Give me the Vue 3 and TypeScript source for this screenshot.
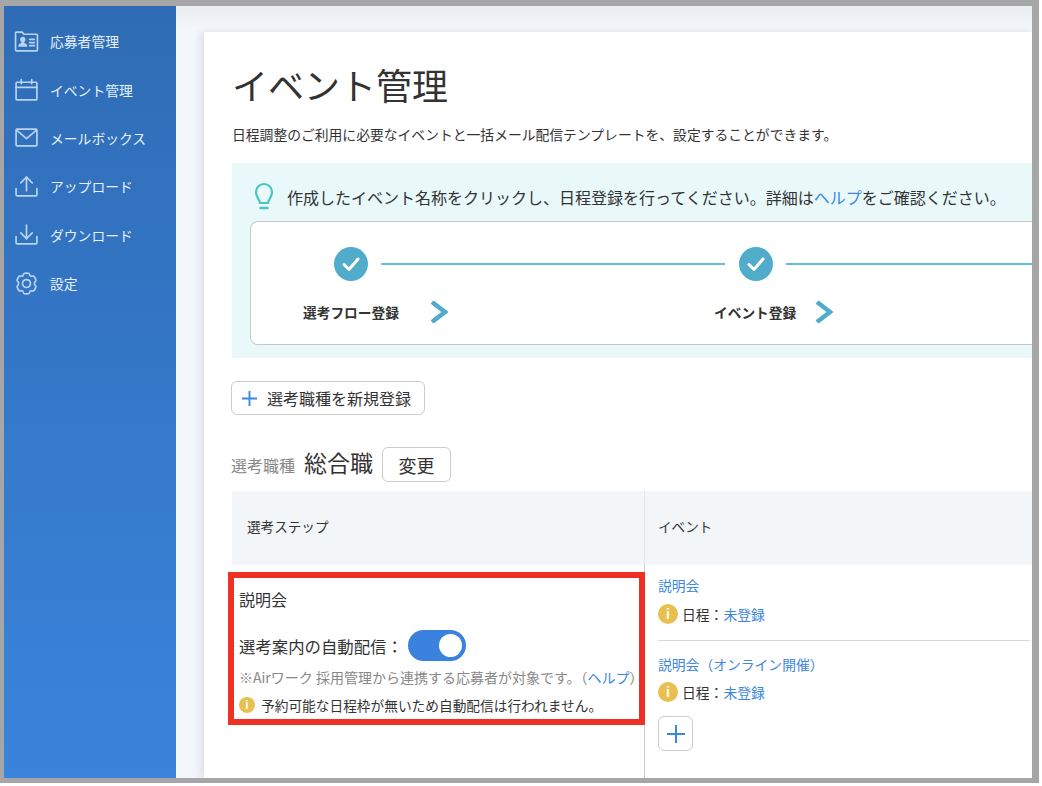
<template>
  <div class="frame">
    <aside class="sidebar">
      <a v-for="item in navItems" :key="item.label" class="nav-item">
        <svg class="nav-icon" viewBox="0 0 24 24" fill="none" stroke="currentColor" stroke-width="1.6" stroke-linecap="round" stroke-linejoin="round">
          <path v-for="(d, i) in item.paths" :key="i" :d="d" />
          <path v-if="item.solid" :d="item.solid" fill="currentColor" stroke="none" />
        </svg>
        <span>{{ item.label }}</span>
      </a>
    </aside>

    <main class="main">
      <section class="card">
        <h1 class="title">イベント管理</h1>
        <p class="lead">日程調整のご利用に必要なイベントと一括メール配信テンプレートを、設定することができます。</p>

        <div class="hint">
          <div class="hint-text">
            <svg class="bulb" viewBox="0 0 24 30" fill="none" stroke="#4cc4c4" stroke-width="2.2" stroke-linecap="round">
              <path d="M8 21c0-3-4-5-4-11a8 8 0 0 1 16 0c0 6-4 8-4 11z" />
              <path d="M8.500 26h7" stroke-width="2.600" />
            </svg>
            <span>作成したイベント名称をクリックし、日程登録を行ってください。詳細は<a class="link">ヘルプ</a>をご確認ください。</span>
          </div>
          <div class="steps">
            <div v-for="step in steps" :key="step" class="step">
              <div class="step-track">
                <svg class="check" viewBox="0 0 34 34">
                  <circle cx="17" cy="17" r="17" fill="#50acca" />
                  <path d="M10 17.500l5 5 9-10.500" fill="none" stroke="#fff" stroke-width="3" stroke-linecap="round" stroke-linejoin="round" />
                </svg>
                <span class="step-line"></span>
              </div>
              <div class="step-label">
                <b>{{ step }}</b>
                <svg class="chevron" viewBox="0 0 18 22" fill="none" stroke="#50acca" stroke-width="4.500">
                  <path d="M2 1l13 10-13 10" />
                </svg>
              </div>
            </div>
          </div>
        </div>

        <button class="btn add-job">
          <svg class="plus" viewBox="0 0 18 18" stroke="#3b87e0" stroke-width="2"><path d="M9 1v16M1 9h16" /></svg>
          選考職種を新規登録
        </button>

        <div class="job-row">
          <span class="job-label">選考職種</span>
          <span class="job-name">総合職</span>
          <button class="btn job-change">変更</button>
        </div>

        <div class="table">
          <div class="th th-step">選考ステップ</div>
          <div class="th th-event">イベント</div>

          <div class="td-step">
            <div class="highlight">
              <div class="step-name">説明会</div>
              <div class="auto-row">
                <span>選考案内の自動配信：</span>
                <span class="toggle"><span class="knob"></span></span>
              </div>
              <p class="note">※Airワーク 採用管理から連携する応募者が対象です。（<a class="link">ヘルプ</a>）</p>
              <p class="warn">
                <span class="info info-small">i</span>
                予約可能な日程枠が無いため自動配信は行われません。
              </p>
            </div>
          </div>

          <div class="td-event">
            <div v-for="(ev, i) in events" :key="ev" class="event" :class="{ 'event-first': i === 0 }">
              <a class="link event-name">{{ ev }}</a>
              <div class="event-date">
                <span class="info">i</span>
                <span>日程：<a class="link">未登録</a></span>
              </div>
            </div>
            <button class="btn add-event">
              <svg class="plus-event" viewBox="0 0 20 20" stroke="#3b87e0" stroke-width="2"><path d="M10 1v18M1 10h18" /></svg>
            </button>
          </div>
        </div>
      </section>
    </main>
  </div>
</template>

<script setup lang="ts">
interface NavItem {
  label: string
  paths: string[]
  solid?: string
}

const navItems: NavItem[] = [
  {
    label: '応募者管理',
    paths: [
      'M1.500 5V4a1 1 0 0 1 1-1h5.500l1.500 2h12a1 1 0 0 1 1 1v14a1 1 0 0 1-1 1h-19a1 1 0 0 1-1-1z',
      'M15 10h4.500M15 13h4.500M15 16h4.500',
    ],
    solid: 'M8.500 7.500a2.500 2.500 0 0 1 2.500 3c-.2 1-.6 1.700-1.200 2.200v.8c1.700.4 3 1.300 3 3.500h-8.700c0-2.200 1.300-3.100 3-3.500v-.8c-.6-.5-1-1.200-1.200-2.200a2.500 2.500 0 0 1 2.600-3z',
  },
  {
    label: 'イベント管理',
    paths: ['M3 5h18a1 1 0 0 1 1 1v15a1 1 0 0 1-1 1H3a1 1 0 0 1-1-1V6a1 1 0 0 1 1-1z', 'M2 10h20', 'M7 2.500v4M17 2.500v4'],
  },
  {
    label: 'メールボックス',
    paths: ['M3 4h18a1 1 0 0 1 1 1v14a1 1 0 0 1-1 1H3a1 1 0 0 1-1-1V5a1 1 0 0 1 1-1z', 'M2.500 5l9.500 8 9.500-8'],
  },
  {
    label: 'アップロード',
    paths: ['M12 16V3', 'M6.500 8.500L12 3l5.500 5.500', 'M2 14v6a1 1 0 0 0 1 1h18a1 1 0 0 0 1-1v-6'],
  },
  {
    label: 'ダウンロード',
    paths: ['M12 3v13', 'M6.500 10.500L12 16l5.500-5.500', 'M2 14v6a1 1 0 0 0 1 1h18a1 1 0 0 0 1-1v-6'],
  },
  {
    label: '設定',
    paths: [
      'M9.500 2.500c1-.6 4-.6 5 0 .7.5.5 2 1.200 2.400.8.500 2-.4 2.900 0 1 .5 2.500 3 2.400 4.200-.1.900-1.500 1.400-1.500 2.900s1.400 2 1.500 2.900c.1 1.200-1.400 3.700-2.400 4.200-.9.400-2.100-.5-2.900 0-.7.400-.5 1.900-1.200 2.400-1 .6-4 .6-5 0-.7-.5-.5-2-1.200-2.400-.8-.5-2 .4-2.900 0-1-.5-2.500-3-2.400-4.200.1-.9 1.500-1.400 1.500-2.900s-1.400-2-1.500-2.900c-.1-1.200 1.400-3.700 2.400-4.200.9-.4 2.100.5 2.900 0 .7-.4.5-1.900 1.200-2.400z',
      'M15.800 12a3.800 3.800 0 1 1-7.600 0a3.800 3.800 0 0 1 7.600 0z',
    ],
  },
]

const steps = ['選考フロー登録', 'イベント登録']
const events = ['説明会', '説明会（オンライン開催）']
</script>

<style>
html,
body {
  margin: 0;
  background: #fff;
  overflow: hidden;
}
</style>

<style scoped>
.frame {
  box-sizing: border-box;
  width: 1039px;
  height: 783px;
  display: flex;
  overflow: hidden;
  border-style: solid;
  border-color: #a6a6a6;
  border-width: 6px 7px 5px 4px;
  font-family: "Noto Sans CJK JP", "Noto Sans", sans-serif;
  color: #333;
}

.sidebar {
  flex: 0 0 172px;
  padding-top: 11px;
  background: linear-gradient(#2f6cb5, #3a84dc);
  color: #e6f0fb;
}

.nav-item {
  display: flex;
  align-items: center;
  gap: 11px;
  height: 48.4px;
  padding-left: 10px;
  font-size: 13.8px;
}

.nav-icon {
  width: 25px;
  height: 25px;
  color: #b9d4f2;
}

.main {
  flex: 1;
  min-width: 0;
  padding: 26px 0 0 28px;
  background: linear-gradient(#e9edf1, #f3f6fa 22px);
}

.card {
  height: 100%;
  padding: 1px 0 0 28px;
  background: #fff;
  box-shadow: -3px 0 8px rgba(0, 0, 0, 0.1);
}

.title {
  margin: 24px 0 0;
  font-size: 36px;
  font-weight: 400;
  line-height: 54px;
  color: #333;
}

.lead {
  margin: 13px 0 0;
  font-size: 13.8px;
  line-height: 20px;
  white-space: nowrap;
}

.hint {
  box-sizing: border-box;
  height: 195px;
  margin-top: 19px;
  padding: 20px 0 0 18px;
  background: #e9f9fa;
}

.hint-text {
  box-sizing: border-box;
  display: flex;
  align-items: center;
  gap: 11px;
  height: 38px;
  padding-bottom: 10px;
  font-size: 16px;
  white-space: nowrap;
}

.bulb {
  flex: none;
  width: 24px;
  height: 30px;
  margin-left: 2px;
}

.link {
  color: #3b87e0;
}

.steps {
  box-sizing: border-box;
  display: flex;
  height: 124px;
  padding: 25px 0 0 83px;
  background: #fff;
  border: 1px solid #c8c8c8;
  border-right: none;
  border-radius: 8px 0 0 8px;
}

.step {
  flex: 0 0 405px;
}

.step-track {
  display: flex;
  align-items: center;
  gap: 13px;
}

.check {
  flex: none;
  width: 34px;
  height: 34px;
}

.step-line {
  width: 344px;
  height: 2px;
  background: #62bddb;
}

.step-label {
  display: flex;
  align-items: center;
  gap: 31px;
  height: 24px;
  margin: 19px 0 0 -31px;
  font-size: 13.7px;
  white-space: nowrap;
}

.step:nth-child(2) .step-label {
  gap: 19px;
  margin-left: -25px;
}

.step-label b {
  font-weight: 700;
}

.chevron {
  width: 18px;
  height: 22px;
}

.btn {
  font-family: inherit;
  color: #333;
  background: #fff;
  border: 1px solid #ccc;
  border-radius: 6px;
  cursor: pointer;
}

.add-job {
  display: flex;
  align-items: center;
  gap: 9px;
  width: 194px;
  height: 34px;
  margin: 23px 0 0 -1px;
  padding: 0 0 0 9px;
  font-size: 16px;
  white-space: nowrap;
}

.plus {
  flex: none;
  width: 17px;
  height: 17px;
}

.job-row {
  display: flex;
  align-items: center;
  height: 35px;
  margin: 32px 0 0 -1px;
}

.job-label {
  font-size: 16px;
  color: #888;
  margin-top: 1px;
}

.job-name {
  margin: 0 9px 5px 9px;
  font-size: 23px;
}

.job-change {
  width: 69px;
  height: 35px;
  font-size: 18px;
}

.table {
  display: grid;
  grid-template-columns: 412px 1fr;
  grid-template-rows: 74px 1fr;
  margin-top: 9px;
  height: 287px;
}

.th {
  box-sizing: border-box;
  display: flex;
  align-items: center;
  padding-bottom: 4px;
  font-size: 13.6px;
  background: #f2f6f9;
}

.th-step {
  padding-left: 15px;
}

.th-event {
  padding-left: 13px;
  border-left: 1px solid #e2e6ea;
}

.td-step {
  padding-top: 7px;
}

.highlight {
  box-sizing: border-box;
  position: relative;
  z-index: 1;
  width: 417px;
  height: 153px;
  margin-left: -4px;
  padding: 10px 0 0 5px;
  border: 6px solid #ee3124;
}

.step-name {
  font-size: 16px;
  line-height: 22px;
}

.auto-row {
  display: flex;
  align-items: center;
  gap: 5px;
  height: 31px;
  margin-top: 20px;
  font-size: 16.4px;
}

.toggle {
  display: flex;
  align-items: center;
  justify-content: flex-end;
  width: 58px;
  height: 31px;
  padding-right: 4px;
  box-sizing: border-box;
  background: #3a82de;
  border-radius: 16px;
}

.knob {
  width: 23px;
  height: 23px;
  background: #fff;
  border-radius: 50%;
}

.note {
  margin: 6px 0 0;
  font-size: 14px;
  line-height: 20px;
  color: #888;
  white-space: nowrap;
}

.warn {
  display: flex;
  align-items: center;
  gap: 6px;
  margin: 8px 0 0;
  font-size: 13.7px;
  line-height: 20px;
  white-space: nowrap;
}

.info {
  display: inline-flex;
  flex: none;
  align-items: center;
  justify-content: center;
  width: 20px;
  height: 20px;
  font-family: "Liberation Sans", sans-serif;
  font-size: 14px;
  font-weight: 700;
  color: #fff;
  background: #e9bf4f;
  border-radius: 50%;
}

.info-small {
  width: 16px;
  height: 16px;
  font-size: 12px;
}

.td-event {
  padding: 10px 2px 0 13px;
  border-left: 1px solid #ccc;
}

.event {
  height: 76px;
  border-top: 1px solid #d8d8d8;
  padding-top: 13px;
  box-sizing: border-box;
}

.event-first {
  height: 65px;
  padding-top: 0;
  border-top: none;
}

.event-name {
  display: block;
  font-size: 13.8px;
  line-height: 20px;
  white-space: nowrap;
}

.event-date {
  display: flex;
  align-items: center;
  gap: 4px;
  height: 20px;
  margin-top: 8px;
  font-size: 13.8px;
}

.event-first .event-date {
  margin-top: 9px;
}

.add-event {
  display: flex;
  align-items: center;
  justify-content: center;
  width: 35px;
  height: 35px;
  padding: 0;
}

.plus-event {
  width: 20px;
  height: 20px;
}
</style>
